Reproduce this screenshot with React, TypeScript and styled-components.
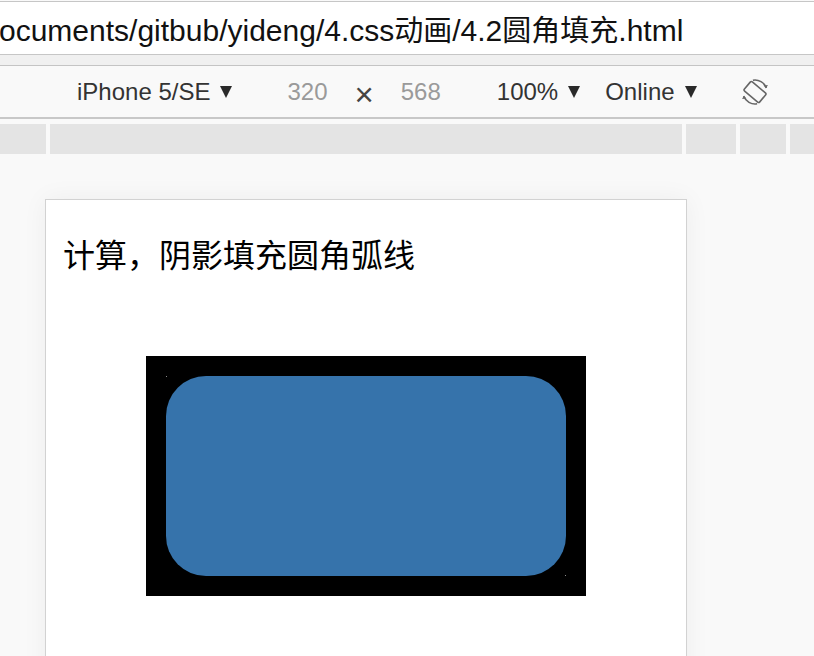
import React from 'react';
import styled, { createGlobalStyle } from 'styled-components';

const GlobalStyle = createGlobalStyle`
  html, body {
    margin: 0;
    padding: 0;
    overflow: hidden;
  }
  body {
    background: #f9f9f9;
    font-family: 'Liberation Sans', Arial, 'Noto Sans CJK SC', sans-serif;
  }
`;

const Window = styled.div`
  width: 814px;
  height: 656px;
  display: flex;
  flex-direction: column;
  background: #f9f9f9;
  overflow: hidden;
`;

const AddressBar = styled.div`
  flex-shrink: 0;
  height: 52px;
  margin-top: 1px;
  border-top: 1px solid #c6c6c6;
  border-bottom: 1px solid #c6c6c6;
  background: #ffffff;
  display: flex;
  align-items: center;
  white-space: nowrap;
  overflow: hidden;
`;

const Url = styled.span`
  margin-left: -1px;
  font-size: 30px;
  color: #111111;
  font-family: 'Liberation Sans', Arial, 'Noto Sans CJK SC', sans-serif;
`;

const Cjk = styled.span`
  font-size: 29px;
  font-family: 'Noto Sans CJK SC', sans-serif;
`;

const Gap = styled.div`
  flex-shrink: 0;
  height: 10px;
  background: #f0f0f0;
  border-bottom: 1px solid #c4c4c4;
`;

const Toolbar = styled.div`
  flex-shrink: 0;
  height: 51px;
  background: #f9f9f9;
  border-bottom: 2px solid #c8c8c8;
  display: flex;
  align-items: center;
  padding-left: 77px;
  font-size: 24px;
  color: #333333;
  white-space: nowrap;
`;

const Item = styled.span<{ $muted?: boolean; $gap?: number }>`
  display: inline-flex;
  align-items: center;
  margin-right: ${p => p.$gap ?? 0}px;
  color: ${p => (p.$muted ? '#9a9a9a' : '#333333')};
`;

const Caret = styled.span`
  display: inline-block;
  width: 0;
  height: 0;
  margin-left: 10px;
  border-left: 6.5px solid transparent;
  border-right: 6.5px solid transparent;
  border-top: 12px solid #2a2a2a;
`;

const Times = styled.span`
  font-size: 33px;
  line-height: 1;
  color: #444444;
  margin: 5px 27px 0 27px;
`;

const TabStrip = styled.div`
  flex-shrink: 0;
  height: 30px;
  margin-top: 5px;
  display: grid;
  grid-template-columns: 46px 632px 50px 46px 1fr;
  column-gap: 4px;
`;

const Tab = styled.div`
  background: #e4e4e4;
`;

const Stage = styled.div`
  flex: 1;
  min-height: 0;
  padding: 45px 0 0 45px;
`;

const Card = styled.div`
  width: 640px;
  height: 600px;
  background: #ffffff;
  border: 1px solid #d2d2d2;
  box-shadow: 0 0 24px rgba(0, 0, 0, 0.05);
  display: flex;
  flex-direction: column;
`;

const Heading = styled.h3`
  margin: 30px 0 0 17px;
  font-size: 32px;
  font-weight: normal;
  color: #000000;
  font-family: 'Noto Sans CJK SC', sans-serif;
  line-height: 46px;
`;

const Frame = styled.div`
  position: relative;
  align-self: center;
  margin-top: 80px;
  width: 440px;
  height: 240px;
  background: #000000;
  display: flex;
  align-items: center;
  justify-content: center;
`;

const Fill = styled.div`
  width: 400px;
  height: 200px;
  border-radius: 40px;
  background: #3673ab;
`;

const Speck = styled.span<{ $x: number; $y: number }>`
  position: absolute;
  left: ${p => p.$x}px;
  top: ${p => p.$y}px;
  width: 1px;
  height: 1px;
  background: #8a8a8a;
`;

const RotateIcon = () => (
  <svg width="30" height="30" viewBox="0 0 30 30" style={{ marginLeft: 43 }}>
    <g fill="none" stroke="#666" strokeWidth="1.6">
      <rect x="9" y="5" width="12" height="20" rx="1.5" transform="rotate(-50 15 15)" />
      <path d="M12.9 3.2 A12 12 0 0 1 26.3 10.9" />
      <path d="M17.1 26.8 A12 12 0 0 1 3.7 19.1" />
    </g>
    <path d="M26.3 10.9 l1.6 -3 l-4.4 0.6 z" fill="#666" />
    <path d="M3.7 19.1 l-1.6 3 l4.4 -0.6 z" fill="#666" />
  </svg>
);

export default function App() {
  return (
    <Window>
      <GlobalStyle />
      <AddressBar>
        <Url>
          ocuments/gitbub/yideng/4.css<Cjk>动画</Cjk>/4.2<Cjk>圆角填充</Cjk>.html
        </Url>
      </AddressBar>
      <Gap />
      <Toolbar>
        <Item $gap={55}>
          iPhone 5/SE
          <Caret />
        </Item>
        <Item $muted>320</Item>
        <Times>×</Times>
        <Item $muted $gap={56}>568</Item>
        <Item $gap={25}>
          100%
          <Caret />
        </Item>
        <Item>
          Online
          <Caret />
        </Item>
        <RotateIcon />
      </Toolbar>
      <TabStrip>
        <Tab />
        <Tab />
        <Tab />
        <Tab />
        <Tab />
      </TabStrip>
      <Stage>
        <Card>
          <Heading>计算，阴影填充圆角弧线</Heading>
          <Frame>
            <Fill />
            <Speck $x={20} $y={20} />
            <Speck $x={419} $y={219} />
          </Frame>
        </Card>
      </Stage>
    </Window>
  );
}
